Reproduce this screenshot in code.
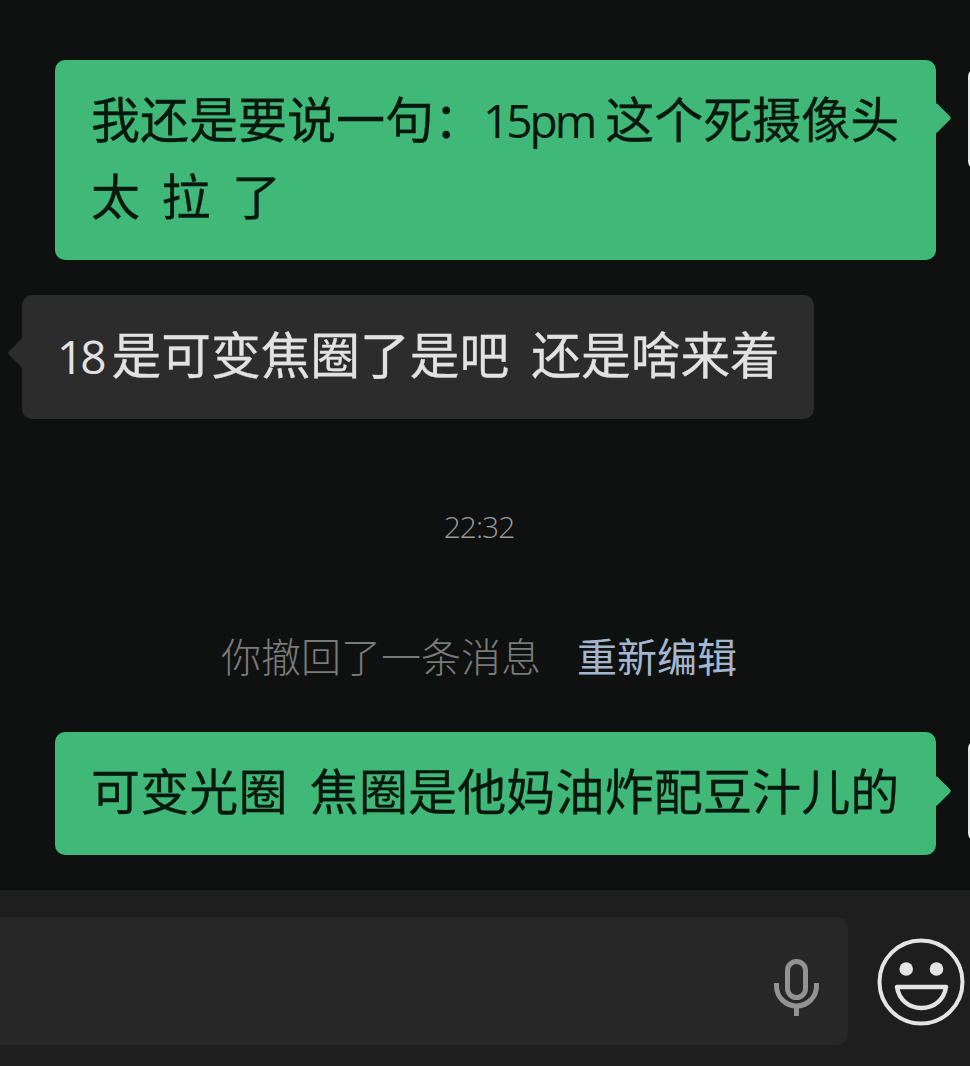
<template>
  <div class="page">
    <main class="chat">
      <div class="row mine">
        <div class="bubble green">
          我还是要说一句：<span class="latin">15pm</span> 这个死摄像头<br />
          <span class="wide">太 拉 了</span>
        </div>
        <div class="avatar"></div>
      </div>

      <div class="row theirs">
        <div class="bubble grey"><span class="latin num">18</span>是可变焦圈了是吧&nbsp;&nbsp;还是啥来着</div>
      </div>

      <div class="time">22:32</div>

      <div class="recall">
        <span>你撤回了一条消息</span>
        <span class="edit">重新编辑</span>
      </div>

      <div class="row mine last">
        <div class="bubble green">可变光圈&nbsp;&nbsp;焦圈是他妈油炸配豆汁儿的</div>
        <div class="avatar"></div>
      </div>
    </main>

    <footer class="bar">
      <div class="input">
        <svg class="mic" viewBox="0 0 46 58" width="46" height="58" fill="none" stroke="#929292">
          <rect x="13.5" y="2.5" width="18" height="36" rx="9" stroke-width="5" />
          <path d="M2.5 24 V27 A20 20 0 0 0 42.5 27 V24" stroke-width="5" />
          <path d="M22.5 46 V57" stroke-width="5" />
        </svg>
      </div>
      <svg class="emoji" viewBox="0 0 88 88" width="88" height="88" fill="none" stroke="#e4e4e4">
        <circle cx="44" cy="44" r="41.5" stroke-width="4" />
        <circle cx="29.2" cy="31" r="6.8" fill="#e4e4e4" stroke="none" />
        <circle cx="59.5" cy="31" r="6.8" fill="#e4e4e4" stroke="none" />
        <path d="M20 49 H69 C67 62 57 70 44.500 70 C32 70 22 62 20 49 Z" stroke-width="4.500" stroke-linejoin="round" />
      </svg>
    </footer>
  </div>
</template>

<style>
html, body { margin: 0; background: #0f1110; }
</style>

<style scoped>
.page {
  width: 970px;
  height: 1066px;
  overflow: hidden;
  display: flex;
  flex-direction: column;
  background: #0f1110;
  font-family: "Noto Sans CJK SC", sans-serif;
}
.chat {
  flex: 1;
  padding-top: 60px;
  display: flex;
  flex-direction: column;
}
.row { display: flex; align-items: flex-start; }
.row.mine { padding-left: 55px; gap: 32px; }
.row.theirs { padding-left: 22px; margin-top: 35px; }
.bubble {
  position: relative;
  flex: none;
  box-sizing: border-box;
  border-radius: 10px;
  line-height: 77px;
  white-space: nowrap;
  -webkit-text-stroke: 0.3px currentColor;
}
.bubble::after {
  content: "";
  position: absolute;
  width: 22px;
  height: 22px;
  background: inherit;
  transform: rotate(45deg);
  border-radius: 2px;
}
.green {
  width: 881px;
  padding: 18px 36px 28px 36px;
  background: #3fb878;
  color: #06170e;
  font-size: 49px;
}
.green::after { right: -11px; top: 47px; }
.row.last .green { letter-spacing: 0.14px; }
.row.last .green::after { top: 48px; }
.grey {
  width: 792px;
  padding: 19px 36px 28px 35px;
  background: #2c2c2c;
  color: #e2e2e2;
  font-size: 49.7px;
}
.grey::after { left: -10px; top: 47px; }
.latin {
  font-family: "Open Sans", sans-serif;
  font-weight: 400;
  font-size: 46px;
  letter-spacing: -3px;
  line-height: 0;
  -webkit-text-stroke: 0;
}
.num { margin-right: 8px; }
.wide { word-spacing: 10.5px; }
.avatar {
  width: 40px;
  height: 104px;
  flex: none;
  margin-top: 7px;
  background: #e8e8e8;
  border-radius: 10px;
}
.time {
  margin-top: 88px;
  text-align: center;
  padding-right: 12px;
  font-family: "Open Sans", sans-serif;
  font-weight: 300;
  font-size: 30px;
  line-height: 40px;
  color: #999999;
  letter-spacing: -1px;
}
.recall {
  margin-top: 78px;
  padding-left: 221px;
  display: flex;
  gap: 36px;
  font-size: 40px;
  line-height: 60px;
  font-weight: 300;
  color: #7a7a7a;
}
.edit { color: #a3b6cf; font-weight: 400; }
.row.last { margin-top: 47px; }
.bar {
  height: 176px;
  flex: none;
  background: #1e1e1e;
  display: flex;
  align-items: flex-start;
  padding-top: 27px;
  box-sizing: border-box;
}
.input {
  width: 848px;
  height: 128px;
  flex: none;
  box-sizing: border-box;
  background: #272727;
  border-radius: 0 12px 12px 0;
  display: flex;
  align-items: center;
  justify-content: flex-end;
  padding: 14px 28px 0 0;
}
.emoji { margin: 21px 0 0 28.5px; flex: none; }
</style>
